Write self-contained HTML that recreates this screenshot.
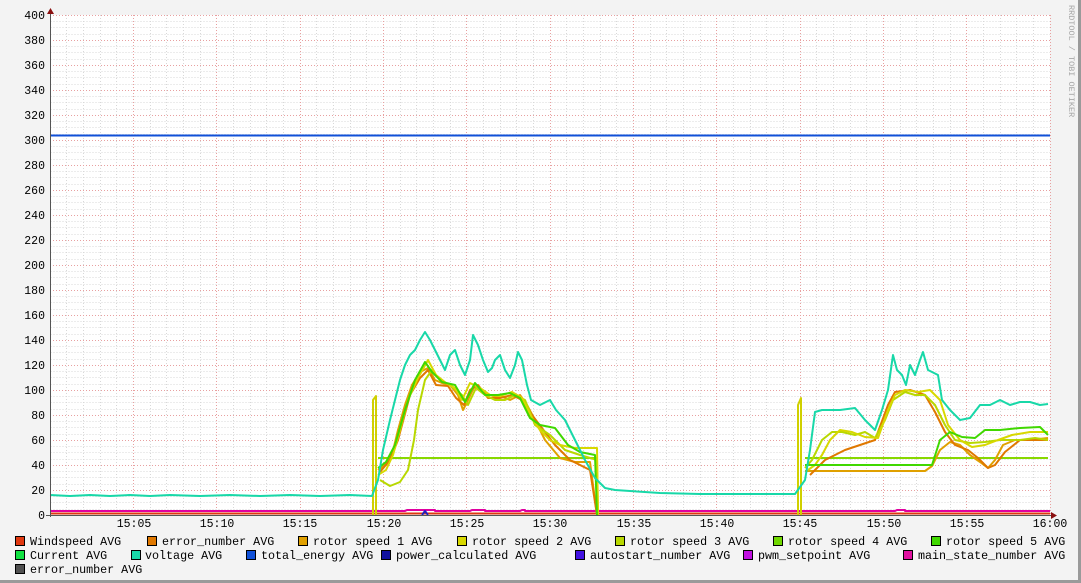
<!DOCTYPE html>
<html><head><meta charset="utf-8"><style>
html,body{margin:0;padding:0;width:1081px;height:583px;overflow:hidden;background:#f3f3f3}
svg{display:block}
text{font-family:"Liberation Mono","DejaVu Sans Mono",monospace}
</style></head><body>
<svg width="1081" height="583" viewBox="0 0 1081 583" xmlns="http://www.w3.org/2000/svg">
<rect x="0" y="0" width="1081" height="583" fill="#f3f3f3"/>
<rect x="1078" y="0" width="3" height="583" fill="#9a9a9a"/>
<rect x="0" y="580" width="1081" height="3" fill="#9a9a9a"/>
<rect x="50" y="15" width="1000" height="500" fill="#ffffff"/>
<g id="minor" stroke="#d8d8d8" stroke-width="1" stroke-dasharray="1,2">
<path d="M50.5 21.5H1050M50.5 27.5H1050M50.5 34.5H1050M50.5 46.5H1050M50.5 52.5H1050M50.5 59.5H1050M50.5 71.5H1050M50.5 77.5H1050M50.5 84.5H1050M50.5 96.5H1050M50.5 102.5H1050M50.5 109.5H1050M50.5 121.5H1050M50.5 127.5H1050M50.5 134.5H1050M50.5 146.5H1050M50.5 152.5H1050M50.5 159.5H1050M50.5 171.5H1050M50.5 177.5H1050M50.5 184.5H1050M50.5 196.5H1050M50.5 202.5H1050M50.5 209.5H1050M50.5 221.5H1050M50.5 227.5H1050M50.5 234.5H1050M50.5 246.5H1050M50.5 252.5H1050M50.5 259.5H1050M50.5 271.5H1050M50.5 277.5H1050M50.5 284.5H1050M50.5 296.5H1050M50.5 302.5H1050M50.5 309.5H1050M50.5 321.5H1050M50.5 327.5H1050M50.5 334.5H1050M50.5 346.5H1050M50.5 352.5H1050M50.5 359.5H1050M50.5 371.5H1050M50.5 377.5H1050M50.5 384.5H1050M50.5 396.5H1050M50.5 402.5H1050M50.5 409.5H1050M50.5 421.5H1050M50.5 427.5H1050M50.5 434.5H1050M50.5 446.5H1050M50.5 452.5H1050M50.5 459.5H1050M50.5 471.5H1050M50.5 477.5H1050M50.5 484.5H1050M50.5 496.5H1050M50.5 502.5H1050M50.5 509.5H1050"/>
<path d="M66.5 15V515M83.5 15V515M100.5 15V515M116.5 15V515M150.5 15V515M166.5 15V515M183.5 15V515M200.5 15V515M233.5 15V515M250.5 15V515M266.5 15V515M283.5 15V515M316.5 15V515M333.5 15V515M350.5 15V515M366.5 15V515M400.5 15V515M416.5 15V515M433.5 15V515M450.5 15V515M483.5 15V515M500.5 15V515M516.5 15V515M533.5 15V515M566.5 15V515M583.5 15V515M600.5 15V515M616.5 15V515M650.5 15V515M666.5 15V515M683.5 15V515M700.5 15V515M733.5 15V515M750.5 15V515M766.5 15V515M783.5 15V515M816.5 15V515M833.5 15V515M850.5 15V515M866.5 15V515M900.5 15V515M916.5 15V515M933.5 15V515M950.5 15V515M983.5 15V515M1000.5 15V515M1016.5 15V515M1033.5 15V515"/>
</g>
<g stroke="#e8a0a0" stroke-width="1" stroke-dasharray="1,2">
<path d="M50 15.5H1050M50 40.5H1050M50 65.5H1050M50 90.5H1050M50 115.5H1050M50 140.5H1050M50 165.5H1050M50 190.5H1050M50 215.5H1050M50 240.5H1050M50 265.5H1050M50 290.5H1050M50 315.5H1050M50 340.5H1050M50 365.5H1050M50 390.5H1050M50 415.5H1050M50 440.5H1050M50 465.5H1050M50 490.5H1050"/>
<path d="M133.5 15V515M216.5 15V515M300.5 15V515M383.5 15V515M466.5 15V515M550.5 15V515M633.5 15V515M716.5 15V515M800.5 15V515M883.5 15V515M966.5 15V515M1050.5 15V515"/>
</g>
<g font-size="11.5" fill="#000" text-anchor="end">
<text x="45" y="19">400</text><text x="45" y="44">380</text><text x="45" y="69">360</text><text x="45" y="94">340</text><text x="45" y="119">320</text><text x="45" y="144">300</text><text x="45" y="169">280</text><text x="45" y="194">260</text><text x="45" y="219">240</text><text x="45" y="244">220</text><text x="45" y="269">200</text><text x="45" y="294">180</text><text x="45" y="319">160</text><text x="45" y="344">140</text><text x="45" y="369">120</text><text x="45" y="394">100</text><text x="45" y="419">80</text><text x="45" y="444">60</text><text x="45" y="469">40</text><text x="45" y="494">20</text><text x="45" y="519">0</text>
</g>
<g font-size="11.5" fill="#000" text-anchor="middle">
<text x="134" y="527">15:05</text><text x="217" y="527">15:10</text><text x="300" y="527">15:15</text><text x="384" y="527">15:20</text><text x="467" y="527">15:25</text><text x="550" y="527">15:30</text><text x="634" y="527">15:35</text><text x="717" y="527">15:40</text><text x="800" y="527">15:45</text><text x="884" y="527">15:50</text><text x="967" y="527">15:55</text><text x="1050" y="527">16:00</text>
</g>
<g fill="none" stroke-width="2" stroke-linejoin="round">
<path stroke="#1050d8" d="M50 135.5H1050"/>
<path stroke="#e000a0" d="M50 511H405L407 510H435V511H470L472 510H485V511H520L522 510H525V511H895L897 510H905V511H1050"/>
<path stroke="#e03810" d="M50 513.5H1050"/>
<path stroke="#2020c0" d="M422 515L425 511L428 515"/>
<path stroke="#88d800" d="M378 458H597V515M805 458H1048"/>
<path stroke="#d0d000" d="M373 515V400L376 396V515M798 515V405L801 398V515"/>
<path stroke="#e0a000" d="M378 470L385 465L392 455L398 430L405 405L412 385L420 372L428 368L435 380L442 383L450 385L458 395L463 410L468 400L475 385L482 390L490 398L500 396L510 400L520 395L527 405L535 420L545 440L560 458L575 462L590 462L597 515M805 471H925L932 466L940 450L950 442L960 445L970 455L980 462L988 468L995 460L1003 445L1015 440L1030 440L1048 438"/>
<path stroke="#e07800" d="M380 472L390 460L398 440L410 395L420 378L428 370L436 385L448 386L456 398L464 405L470 390L478 385L488 398L500 398L512 395L522 400L532 415L545 432L555 445L570 460L590 470L597 515M810 475L815 470L825 460L835 455L845 450L860 445L875 440L888 405L895 392L910 390L925 395L935 412L945 432L955 445L968 450L978 458L988 468L995 465L1005 452L1020 440L1048 440"/>
<path stroke="#b8d800" d="M380 480L390 486L400 482L408 470L414 440L418 410L425 380L432 370L440 380L450 385L462 395L468 405L476 388L485 395L495 400L505 400L515 395L525 400L535 425L550 435L565 450L580 455L597 460L598 515M805 468L812 460L822 440L832 432L842 432L855 435L865 432L875 438L885 420L893 400L905 392L915 395L925 395L935 405L945 425L955 440L970 443L985 442L1000 440L1020 440L1035 438L1048 440"/>
<path stroke="#d8d800" d="M378 475L386 470L393 455L400 430L408 400L418 378L428 360L436 375L446 383L455 388L462 400L470 383L480 388L490 395L500 396L512 392L522 398L533 420L540 430L550 440L560 445L575 448L597 448L598 515M808 470L815 465L822 455L830 440L840 430L852 432L865 437L878 438L888 410L895 395L905 390L918 392L930 390L940 400L948 425L960 440L972 447L985 445L998 440L1012 435L1030 432L1048 432"/>
<path stroke="#40d800" d="M378 468L386 462L395 445L405 410L415 380L425 362L432 372L442 382L455 385L465 402L475 383L485 395L498 395L510 393L520 398L530 418L540 425L555 428L568 445L580 452L595 455L597 515M805 465H932L940 440L950 432L962 437L975 438L985 430L1000 430L1020 428L1040 427L1048 435"/>
<path stroke="#18d8a8" d="M50 495L70 496L90 495L110 496L130 495L150 496L170 495L200 496L230 495L260 496L290 495L320 496L350 495L372 496L378 480L383 450L390 420L395 400L400 380L405 365L410 355L415 350L420 340L425 332L430 340L435 350L440 360L445 370L450 355L455 350L460 365L465 375L470 360L473 335L478 345L483 360L488 372L492 368L495 360L500 355L505 370L510 378L515 365L518 352L522 360L527 385L531 400L540 405L550 400L556 410L565 420L575 440L585 460L595 478L605 488L615 490L630 491L660 493L700 494L740 494L770 494L795 494L805 480L810 450L815 412L822 410L840 410L855 408L865 420L875 430L882 410L888 390L893 355L897 370L902 375L906 385L910 365L915 375L920 360L923 352L928 370L932 372L938 375L942 400L950 410L960 420L970 418L980 405L990 405L1000 400L1010 405L1020 402L1030 402L1040 405L1048 404"/>
</g>
<path d="M50.5 10V517M46 515.5H1053" stroke="#555" stroke-width="1"/>
<path d="M47 14L50.5 8L54 14Z M1051 512L1057 515.5L1051 519Z" fill="#8b1010"/>
<text font-size="8.5" fill="#a8a8a8" transform="translate(1069,5) rotate(90)">RRDTOOL / TOBI OETIKER</text>
<g font-size="11.7" fill="#000" stroke="#000" stroke-width="1">
<rect x="15.5" y="536.5" width="9" height="9" fill="#e03810"/><rect x="147.5" y="536.5" width="9" height="9" fill="#e07800"/><rect x="298.5" y="536.5" width="9" height="9" fill="#e0a000"/><rect x="457.5" y="536.5" width="9" height="9" fill="#d8d800"/><rect x="615.5" y="536.5" width="9" height="9" fill="#b8d800"/><rect x="773.5" y="536.5" width="9" height="9" fill="#70d800"/><rect x="931.5" y="536.5" width="9" height="9" fill="#40d800"/>
<rect x="15.5" y="550.5" width="9" height="9" fill="#10e040"/><rect x="131.5" y="550.5" width="9" height="9" fill="#18d8a8"/><rect x="246.5" y="550.5" width="9" height="9" fill="#1050d8"/><rect x="381.5" y="550.5" width="9" height="9" fill="#1010a0"/><rect x="575.5" y="550.5" width="9" height="9" fill="#4010e0"/><rect x="743.5" y="550.5" width="9" height="9" fill="#c010e0"/><rect x="903.5" y="550.5" width="9" height="9" fill="#e010a0"/>
<rect x="15.5" y="564.5" width="9" height="9" fill="#505050"/>
</g>
<g font-size="11.7" fill="#000">
<text x="30" y="545">Windspeed AVG</text><text x="162" y="545">error_number AVG</text><text x="313" y="545">rotor speed 1 AVG</text><text x="472" y="545">rotor speed 2 AVG</text><text x="630" y="545">rotor speed 3 AVG</text><text x="788" y="545">rotor speed 4 AVG</text><text x="946" y="545">rotor speed 5 AVG</text>
<text x="30" y="559">Current AVG</text><text x="145" y="559">voltage AVG</text><text x="261" y="559">total_energy AVG</text><text x="396" y="559">power_calculated AVG</text><text x="590" y="559">autostart_number AVG</text><text x="758" y="559">pwm_setpoint AVG</text><text x="918" y="559">main_state_number AVG</text>
<text x="30" y="573">error_number AVG</text>
</g>
</svg>
</body></html>
